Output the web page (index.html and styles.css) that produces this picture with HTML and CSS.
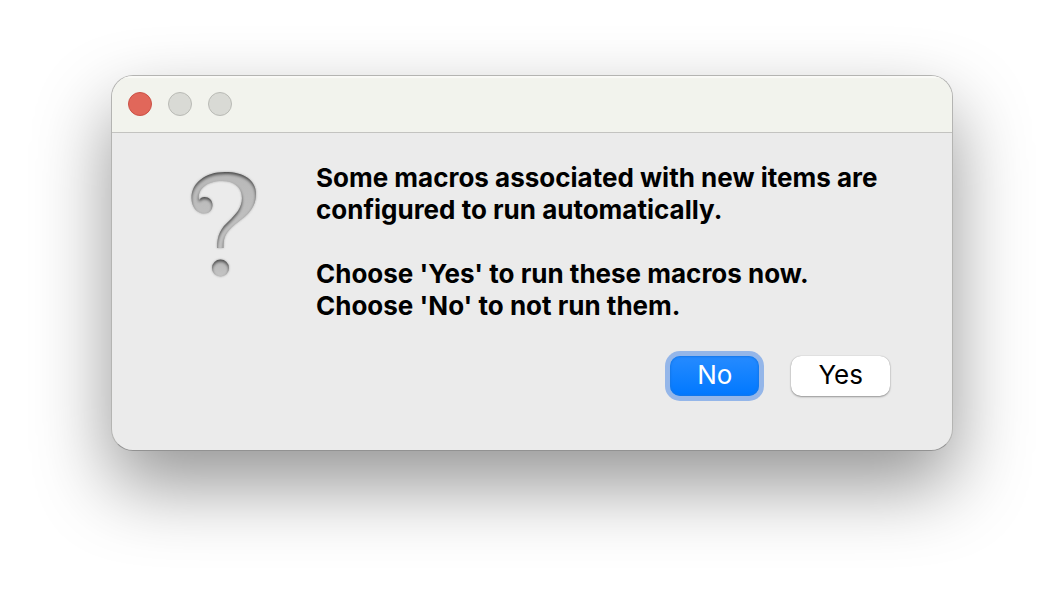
FILE: index.html
```html
<!DOCTYPE html>
<html lang="en">
<head>
<meta charset="utf-8">
<title>Run macros</title>
<link rel="stylesheet" href="styles.css">
</head>
<body>
<main class="dialog" role="alertdialog" aria-labelledby="message">
  <header class="titlebar">
    <button class="light light-close" type="button" aria-label="Close"></button>
    <button class="light" type="button" aria-label="Minimize" disabled></button>
    <button class="light" type="button" aria-label="Zoom" disabled></button>
  </header>
  <div class="content">
    <div class="body">
      <svg class="icon" viewBox="0 2 90 128" aria-hidden="true">
        <defs>
          <linearGradient id="metal" x1="0" y1="0" x2="0" y2="1">
            <stop offset="0" stop-color="#b8b8b8"/>
            <stop offset="1" stop-color="#c4c4c4"/>
          </linearGradient>
          <filter id="engrave" x="-10%" y="-10%" width="120%" height="120%" color-interpolation-filters="sRGB">
            <feOffset in="SourceAlpha" dy="2" result="shift"/>
            <feGaussianBlur in="shift" stdDeviation="1.5" result="soft"/>
            <feComposite in="SourceAlpha" in2="soft" operator="out" result="edge"/>
            <feFlood flood-color="#000" flood-opacity=".6"/>
            <feComposite in2="edge" operator="in" result="inner"/>
            <feGaussianBlur in="SourceAlpha" stdDeviation="1" result="halo"/>
            <feFlood flood-color="#777" flood-opacity=".6"/>
            <feComposite in2="halo" operator="in" result="outer"/>
            <feMerge>
              <feMergeNode in="outer"/>
              <feMergeNode in="SourceGraphic"/>
              <feMergeNode in="inner"/>
            </feMerge>
          </filter>
        </defs>
        <g fill="url(#metal)" filter="url(#engrave)">
          <path d="M37 88H43.500V84C44 74 49 69 58 62C68 55 76 47 76 34C76 20 64 12 45 12C25 12 11.500 23 11.500 38C11.500 47 17 53.500 24 53.500C29 53.500 32.500 50 32.500 45C32.500 40 29 37 24.500 37C22 37 20.500 38 19 40C17 29 27 21 42 21C54 21 62 27 62 38C62 48 56 54 49 61C41 68 37 75 37 88Z"/>
          <circle cx="40.500" cy="108" r="8.500"/>
        </g>
      </svg>
      <div class="message" id="message">
        <p>Some macros associated with new items are configured to run automatically.</p>
        <p>Choose 'Yes' to run these macros now.<br>Choose 'No' to not run them.</p>
      </div>
    </div>
    <div class="actions">
      <button class="button button-default" type="button">No</button>
      <button class="button" type="button">Yes</button>
    </div>
  </div>
</main>
</body>
</html>
```
FILE: styles.css
```css
* {
  box-sizing: border-box;
}

body {
  min-height: 100vh;
  margin: 0;
  padding: 75px 111px;
  background: #fff;
  color: #000;
  font-family: Inter, "Liberation Sans", sans-serif;
  font-size: 26px;
  line-height: 32px;
}

.dialog {
  overflow: hidden;
  border: 1px solid #b4b4b2;
  border-bottom-color: #929292;
  border-radius: 22px;
  background: #ebebeb;
  box-shadow: 0 34px 76px rgba(0, 0, 0, .42);
}

.titlebar {
  display: flex;
  align-items: center;
  gap: 16px;
  height: 57px;
  padding: 0 16px;
  border-bottom: 1px solid #c3c3c0;
  background: #f2f3ed;
  box-shadow: inset 0 2px 1px #fafaf7;
}

.light {
  width: 24px;
  height: 24px;
  padding: 0;
  border: 1px solid #b9bab5;
  border-radius: 50%;
  background: #d9dad5;
}

.light-close {
  border-color: #cb5146;
  background: #e1675a;
}

.content {
  display: flex;
  flex-direction: column;
  gap: 34px;
  padding: 29px 62px 54px 68px;
}

.body {
  display: flex;
  align-items: flex-start;
  gap: 46px;
}

.icon {
  flex: none;
  width: 90px;
  height: 128px;
}

.message {
  display: flex;
  flex: 1;
  flex-direction: column;
  gap: 32px;
  font-weight: 700;
}

.message p {
  margin: 0;
}

.actions {
  display: flex;
  justify-content: flex-end;
  gap: 32px;
}

.button {
  height: 40px;
  padding: 0 27px 2px;
  border: 0;
  border-radius: 10px;
  background: #fff;
  box-shadow: 0 1px 2px rgba(0, 0, 0, .35), 0 0 1px rgba(0, 0, 0, .3);
  color: #000;
  font: inherit;
}

.button-default {
  background: linear-gradient(#268bff, #0078ff);
  box-shadow: inset 0 0 2px 1px #1478ea, 0 0 0 5px #94b6e9;
  color: #fff;
}
```
